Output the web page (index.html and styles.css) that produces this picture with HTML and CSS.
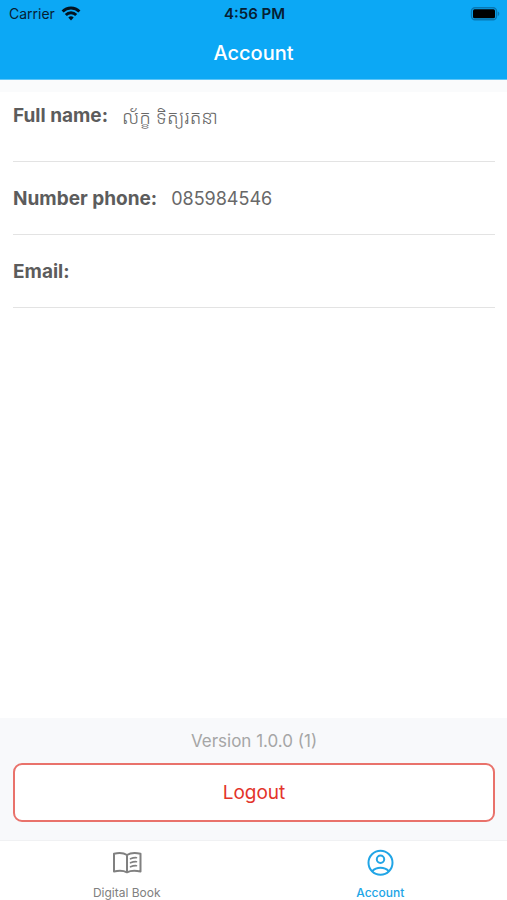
FILE: index.html
```html
<!DOCTYPE html>
<html lang="en">
<head>
<meta charset="utf-8">
<meta name="viewport" content="width=device-width, initial-scale=1">
<title>Account</title>
<link rel="stylesheet" href="styles.css">
</head>
<body>
<div class="app">
  <header class="header">
    <div class="status">
      <div class="carrier">
        <span>Carrier</span>
        <svg width="20" height="16" viewBox="0 0 20 16" fill="none" stroke="#031320" stroke-width="2.9" aria-hidden="true">
          <path d="M1.6 5.5a11.8 11.8 0 0 1 16.8 0"/>
          <path d="M4.8 9a7.3 7.3 0 0 1 10.4 0"/>
          <path d="M10 14.4l-2.7-2.9a3.8 3.8 0 0 1 5.4 0z" fill="#031320" stroke="none"/>
        </svg>
      </div>
      <time class="clock">4:56 PM</time>
      <svg class="battery" width="30" height="14" viewBox="0 0 30 14" aria-hidden="true">
        <rect x="1.5" y="0.8" width="25" height="12" rx="3.5" fill="none" stroke="#0878b4" stroke-width="1.4"/>
        <rect x="3" y="2.3" width="22" height="9" rx="1.5" fill="#000"/>
        <path d="M27.8 4.6v4.5q1.5-.6 1.5-2.25T27.8 4.6z" fill="#0878b4"/>
      </svg>
    </div>
    <h1 class="title">Account</h1>
  </header>
  <main class="content">
    <dl class="details">
      <div class="row"><dt>Full name:</dt><dd class="khmer" lang="km">ល័ក្ខ ទិត្យរតនា</dd></div>
      <div class="row"><dt>Number phone:</dt><dd>085984546</dd></div>
      <div class="row"><dt>Email:</dt><dd></dd></div>
    </dl>
  </main>
  <section class="session">
    <p class="version">Version 1.0.0 (1)</p>
    <button class="logout" type="button">Logout</button>
  </section>
  <nav class="tabs">
    <a class="tab" href="#book">
      <svg width="30" height="28" viewBox="0 0 30 28" fill="none" stroke="currentColor" stroke-width="2" stroke-linecap="round" stroke-linejoin="round" aria-hidden="true">
        <path d="M15 6C12 4 6.5 3.7 2 4.7V22.5C6.5 21.5 12 21.8 15 23.3C18 21.8 23.500 21.5 28.5 22.5V4.7C23.5 3.7 18 4 15 6V23.3"/>
        <path d="M18.5 9.8q3-1.3 6-1.1M18.5 13.8q3-1.3 6-1.1M18.5 17.8q3-1.3 6-1.1" stroke-width="1.6"/>
      </svg>
      <span>Digital Book</span>
    </a>
    <a class="tab active" href="#account" aria-current="page">
      <svg width="28" height="28" viewBox="0 0 28 28" fill="none" stroke="currentColor" stroke-width="2" aria-hidden="true">
        <circle cx="14.5" cy="13.8" r="12"/>
        <circle cx="14.5" cy="10.3" r="3.7"/>
        <path d="M6.2 22.3C10.5 17.7 18.5 17.7 22.8 22.3"/>
      </svg>
      <span>Account</span>
    </a>
  </nav>
</div>
</body>
</html>
```
FILE: styles.css
```css
* {
  box-sizing: border-box;
}

body {
  margin: 0;
  background: #fff;
  color: #5c5c5c;
  font-family: Inter, "Liberation Sans", sans-serif;
}

.app {
  display: flex;
  flex-direction: column;
  min-height: 100vh;
}

.header {
  background: #0ca8f5;
  border-bottom: 1px solid #5fc6f8;
  padding-bottom: 12px;
}

.status {
  display: grid;
  grid-template-columns: 1fr auto 1fr;
  align-items: center;
  height: 27px;
  padding: 0 7px 0 9px;
  color: #062033;
  font-size: 14px;
}

.carrier {
  display: flex;
  align-items: center;
  gap: 6px;
}

.clock {
  font-size: 15px;
  font-weight: 600;
}

.battery {
  justify-self: end;
}

.title {
  margin: 12px 0 0;
  color: #fff;
  font-size: 20px;
  font-weight: 500;
  line-height: 28px;
  text-align: center;
}

.content {
  flex: 1;
  border-top: 12px solid #fafbfc;
}

.details {
  margin: 0 12px 0 13px;
}

.row {
  display: flex;
  align-items: flex-start;
  gap: 14px;
  height: 73px;
  padding-top: 25px;
  border-bottom: 1px solid #e3e3e3;
  line-height: 24px;
}

.row:first-child {
  height: 70px;
  padding-top: 12px;
}

dt {
  font-size: 19px;
  font-weight: 700;
}

dd {
  margin: 0;
  color: #686868;
  font-size: 18px;
}

.khmer {
  font-family: "Noto Sans Khmer", "Khmer OS", Inter, "DejaVu Sans", sans-serif;
  font-size: 19px;
  font-weight: 300;
  line-height: 26px;
}

.session {
  padding: 11px 12px 18px 13px;
  background: #f8f9fb;
}

.version {
  margin: 0 0 10px;
  color: #a6a6a6;
  font-size: 17px;
  line-height: 24px;
  text-align: center;
}

.logout {
  display: block;
  width: 100%;
  height: 59px;
  border: 2px solid #e9726b;
  border-radius: 9px;
  background: #fff;
  color: #e3342b;
  font: 400 19px Inter, "Liberation Sans", sans-serif;
}

.tabs {
  display: grid;
  grid-template-columns: 1fr 1fr;
  height: 60px;
  padding-top: 8px;
  border-top: 1px solid #f0f1f3;
}

.tab {
  display: flex;
  flex-direction: column;
  align-items: center;
  gap: 8px;
  color: #808080;
  font-size: 12px;
  line-height: 16px;
  text-decoration: none;
}

.tab.active {
  color: #21a5e6;
  font-weight: 500;
}
```
